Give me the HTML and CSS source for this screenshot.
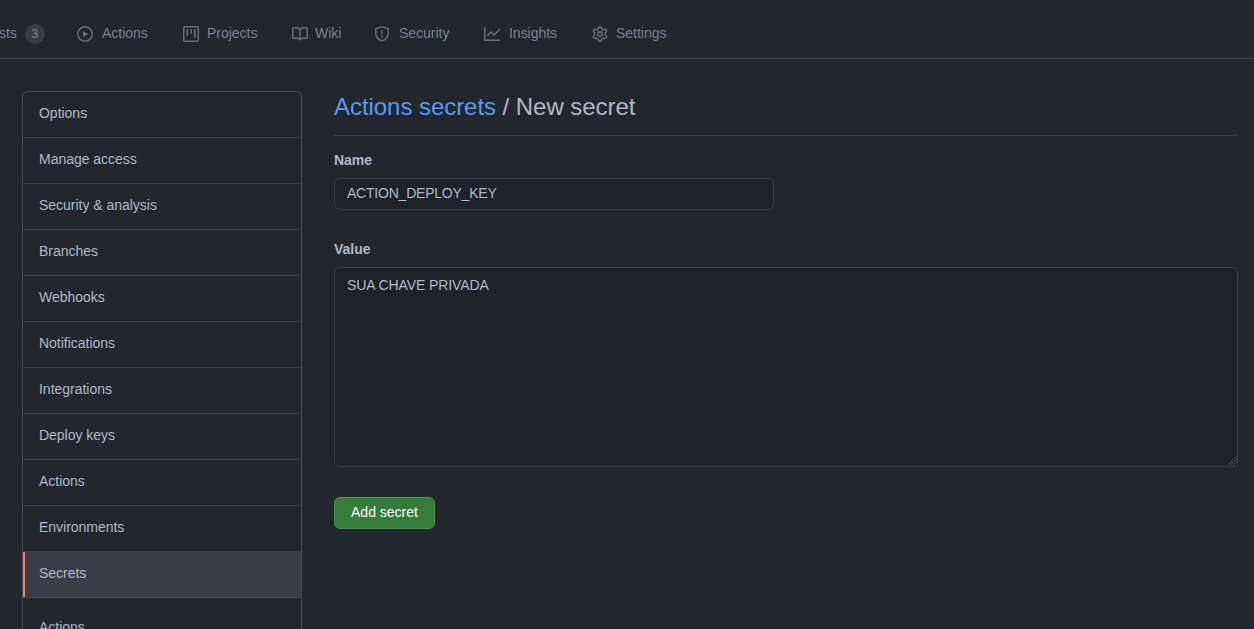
FILE: index.html
```html
<!DOCTYPE html>
<html lang="en">
<head>
<meta charset="utf-8">
<title>New secret</title>
<link rel="stylesheet" href="styles.css">
</head>
<body>
<nav class="tabs">
  <a class="tab tab-pulls"><span>sts</span><span class="counter">3</span></a>
  <a class="tab tab-actions"><svg class="icon" viewBox="0 0 16 16"><path fill-rule="evenodd" d="M1.5 8a6.5 6.5 0 1113 0 6.5 6.5 0 01-13 0zM8 0a8 8 0 100 16A8 8 0 008 0zM6.379 5.227A.25.25 0 006 5.442v5.117a.25.25 0 00.379.214l4.264-2.559a.25.25 0 000-.428L6.379 5.227z"/></svg><span>Actions</span></a>
  <a class="tab tab-projects"><svg class="icon" viewBox="0 0 16 16"><path fill-rule="evenodd" d="M1.75 0A1.75 1.75 0 000 1.75v12.5C0 15.216.784 16 1.75 16h12.5A1.75 1.75 0 0016 14.25V1.75A1.75 1.75 0 0014.25 0H1.75zM1.5 1.75a.25.25 0 01.25-.25h12.5a.25.25 0 01.25.25v12.5a.25.25 0 01-.25.25H1.75a.25.25 0 01-.25-.25V1.75zM11.75 3a.75.75 0 00-.75.75v7.5a.75.75 0 001.5 0v-7.5a.75.75 0 00-.75-.75zm-8.25.75a.75.75 0 011.5 0v5.5a.75.75 0 01-1.5 0v-5.5zM8 3a.75.75 0 00-.75.75v3.5a.75.75 0 001.5 0v-3.5A.75.75 0 008 3z"/></svg><span>Projects</span></a>
  <a class="tab tab-wiki"><svg class="icon" viewBox="0 0 16 16"><path fill-rule="evenodd" d="M0 1.75A.75.75 0 01.75 1h4.253c1.227 0 2.317.59 3 1.501A3.744 3.744 0 0111.006 1h4.245a.75.75 0 01.75.75v10.5a.75.75 0 01-.75.75h-4.507a2.25 2.25 0 00-1.591.659l-.622.621a.75.75 0 01-1.06 0l-.622-.621A2.25 2.25 0 005.258 13H.75a.75.75 0 01-.75-.75V1.75zm8.755 3a2.25 2.25 0 012.25-2.25H14.5v9h-3.757c-.71 0-1.4.201-1.992.572l.004-7.322zm-1.504 7.324l.004-5.073-.002-2.253A2.25 2.25 0 005.003 2.5H1.5v9h3.757a3.75 3.75 0 011.994.574z"/></svg><span>Wiki</span></a>
  <a class="tab tab-security"><svg class="icon" viewBox="0 0 16 16"><path fill-rule="evenodd" d="M7.467.133a1.75 1.75 0 011.066 0l5.25 1.68A1.75 1.75 0 0115 3.48V7c0 1.566-.32 3.182-1.303 4.682-.983 1.498-2.585 2.813-5.032 3.855a1.7 1.7 0 01-1.33 0c-2.447-1.042-4.049-2.357-5.032-3.855C1.32 10.182 1 8.566 1 7V3.48a1.75 1.75 0 011.217-1.667l5.25-1.68zm.61 1.429a.25.25 0 00-.153 0l-5.25 1.68a.25.25 0 00-.174.238V7c0 1.358.275 2.666 1.057 3.86.784 1.194 2.121 2.34 4.366 3.297a.2.2 0 00.154 0c2.245-.956 3.582-2.104 4.366-3.298C13.225 9.666 13.5 8.36 13.5 7V3.48a.25.25 0 00-.174-.237l-5.25-1.68zM9 10.5a1 1 0 11-2 0 1 1 0 012 0zm-.25-5.75a.75.75 0 10-1.5 0v3a.75.75 0 001.5 0v-3z"/></svg><span>Security</span></a>
  <a class="tab tab-insights"><svg class="icon" viewBox="0 0 16 16"><path fill-rule="evenodd" d="M1.5 1.75a.75.75 0 00-1.5 0v12.5c0 .414.336.75.75.75h14.5a.75.75 0 000-1.5H1.5V1.75zm14.28 2.53a.75.75 0 00-1.06-1.06L10 7.94 7.53 5.47a.75.75 0 00-1.06 0L3.22 8.72a.75.75 0 001.06 1.06L7 7.06l2.47 2.47a.75.75 0 001.06 0l5.25-5.25z"/></svg><span>Insights</span></a>
  <a class="tab tab-settings"><svg class="icon" viewBox="0 0 16 16"><path fill-rule="evenodd" d="M7.429 1.525a6.593 6.593 0 011.142 0c.036.003.108.036.137.146l.289 1.105c.147.56.55.967.997 1.189.174.086.341.183.501.29.417.278.97.423 1.53.27l1.102-.303c.11-.03.175.016.195.046.219.31.41.641.573.989.014.031.022.11-.059.19l-.815.806c-.411.406-.562.957-.53 1.456a4.588 4.588 0 010 .582c-.032.499.119 1.05.53 1.456l.815.806c.08.08.073.159.059.19a6.494 6.494 0 01-.573.99c-.02.029-.086.074-.195.045l-1.103-.303c-.559-.153-1.112-.008-1.529.27-.16.107-.327.204-.5.29-.449.222-.851.628-.998 1.189l-.289 1.105c-.029.11-.101.143-.137.146a6.613 6.613 0 01-1.142 0c-.036-.003-.108-.037-.137-.146l-.289-1.105c-.147-.56-.55-.967-.997-1.189a4.502 4.502 0 01-.501-.29c-.417-.278-.97-.423-1.53-.27l-1.102.303c-.11.03-.175-.016-.195-.046a6.492 6.492 0 01-.573-.989c-.014-.031-.022-.11.059-.19l.815-.806c.411-.406.562-.957.53-1.456a4.587 4.587 0 010-.582c.032-.499-.119-1.05-.53-1.456l-.815-.806c-.08-.08-.073-.159-.059-.19a6.44 6.44 0 01.573-.99c.02-.029.086-.075.195-.045l1.103.303c.559.153 1.112.008 1.529-.27.16-.107.327-.204.5-.29.449-.222.851-.628.998-1.189l.289-1.105c.029-.11.101-.143.137-.146zM8 0c-.236 0-.47.01-.701.03-.743.065-1.29.615-1.458 1.261l-.29 1.106c-.017.066-.078.158-.211.224a5.994 5.994 0 00-.668.386c-.123.082-.233.09-.3.071L3.27 2.776c-.644-.177-1.392.02-1.82.63a7.977 7.977 0 00-.704 1.217c-.315.675-.111 1.422.363 1.891l.815.806c.05.048.098.147.088.294a6.084 6.084 0 000 .772c.01.147-.038.246-.088.294l-.815.806c-.474.469-.678 1.216-.363 1.891.2.428.436.835.704 1.218.428.609 1.176.806 1.82.63l1.103-.303c.066-.019.176-.011.299.071.213.143.436.272.668.386.133.066.194.158.212.224l.289 1.106c.169.646.715 1.196 1.458 1.26a8.094 8.094 0 001.402 0c.743-.064 1.29-.614 1.458-1.26l.29-1.106c.017-.066.078-.158.211-.224a5.98 5.98 0 00.668-.386c.123-.082.233-.09.3-.071l1.102.302c.644.177 1.392-.02 1.82-.63.268-.382.505-.789.704-1.217.315-.675.111-1.422-.364-1.891l-.814-.806c-.05-.048-.098-.147-.088-.294a6.1 6.1 0 000-.772c-.01-.147.039-.246.088-.294l.814-.806c.475-.469.679-1.216.364-1.891a7.992 7.992 0 00-.704-1.218c-.428-.609-1.176-.806-1.82-.63l-1.103.303c-.066.019-.176.011-.299-.071a5.991 5.991 0 00-.668-.386c-.133-.066-.194-.158-.212-.224L10.16 1.29C9.99.645 9.444.095 8.701.031A8.094 8.094 0 008 0zm1.5 8a1.5 1.5 0 11-3 0 1.5 1.5 0 013 0zM11 8a3 3 0 11-6 0 3 3 0 016 0z"/></svg><span>Settings</span></a>
</nav>
<div class="layout">
  <aside class="menu">
    <a class="menu-item">Options</a>
    <a class="menu-item">Manage access</a>
    <a class="menu-item">Security &amp; analysis</a>
    <a class="menu-item">Branches</a>
    <a class="menu-item">Webhooks</a>
    <a class="menu-item">Notifications</a>
    <a class="menu-item">Integrations</a>
    <a class="menu-item">Deploy keys</a>
    <a class="menu-item">Actions</a>
    <a class="menu-item">Environments</a>
    <a class="menu-item selected">Secrets</a>
    <a class="menu-item sub">Actions</a>
  </aside>
  <main class="content">
    <h2 class="title"><a class="link">Actions secrets</a> / New secret</h2>
    <label class="label" for="name">Name</label>
    <input class="field name" id="name" type="text" value="ACTION_DEPLOY_KEY">
    <label class="label" for="value">Value</label>
    <div class="value-wrap">
      <textarea class="field value" id="value">SUA CHAVE PRIVADA</textarea>
      <svg class="grip" viewBox="0 0 12 12"><path class="grip-dark" d="M0 11L11 0M3 11l8-8M6 11l5-5M9 11l2-2"/><path class="grip-light" d="M1 11.5L11.5 1M4 11.5L11.5 4M7 11.5L11.5 7"/></svg>
    </div>
    <button class="button">Add secret</button>
  </main>
</div>
</body>
</html>
```
FILE: styles.css
```css
* { box-sizing: border-box; }
body {
  margin: 0;
  height: 629px;
  overflow: hidden;
  background: #22272e;
  color: #adbac7;
  font: 14px/21px "Nimbus Sans", "Liberation Sans", Arial, sans-serif;
  letter-spacing: -0.02px;
  color-scheme: dark;
}
.tabs {
  display: flex;
  height: 59px;
  padding-top: 9px;
  border-bottom: 1px solid #373e47;
  color: #768390;
}
.tab { display: flex; align-items: center; height: 48px; flex: none; }
.icon { width: 16px; height: 16px; margin: 2px 9px 0 0; fill: #636e7b; }
.tab-pulls { width: 78px; margin-left: -1px; }
.tab-pulls .counter {
  width: 20px;
  height: 20px;
  margin: 1px 0 0 8px;
  border-radius: 10px;
  background: #373e47;
  font-size: 12px;
  line-height: 20px;
  text-align: center;
}
.tab-actions { width: 106px; }
.tab-projects { width: 109px; }
.tab-projects .icon { margin-right: 8px; }
.tab-wiki { width: 82px; }
.tab-wiki .icon { margin-right: 7px; }
.tab-security { width: 110px; }
.tab-insights { width: 108px; }
.tab-settings .icon { margin-right: 8px; }
.layout { display: flex; gap: 32px; padding: 32px 16px 0 22px; }
.menu {
  width: 280px;
  height: 560px;
  flex: none;
  border: 1px solid #444c56;
  border-radius: 6px;
  overflow: hidden;
}
.menu-item {
  display: block;
  height: 46px;
  padding: 11px 16px 0;
  border-bottom: 1px solid #373e47;
}
.selected {
  background: #373e47;
  border-bottom-color: #444c56;
  box-shadow: inset 2px 0 #f78166;
}
.sub { padding-top: 19px; }
.content { flex: 1; display: flex; flex-direction: column; align-items: flex-start; }
.title {
  width: 100%;
  height: 45px;
  margin: 0 0 14px;
  border-bottom: 1px solid #373e47;
  font-size: 24px;
  font-weight: 400;
  line-height: 32px;
  letter-spacing: -0.05px;
}
.link { color: #539bf5; }
.label { font-weight: 700; line-height: 21px; margin-bottom: 7px; }
.field {
  display: block;
  border: 1px solid #373e47;
  border-radius: 6px;
  background: #1e232a;
  color: #adbac7;
  font: inherit;
  outline: 0;
}
.name { width: 440px; height: 32px; padding: 4px 12px 6px; margin-bottom: 29px; line-height: 20px; letter-spacing: -0.22px; }
.value-wrap { position: relative; width: 100%; height: 200px; margin-bottom: 30px; }
.value { width: 100%; height: 200px; padding: 7px 12px; margin: 0; resize: none; letter-spacing: -0.1px; }
.grip { position: absolute; right: 0; bottom: 1px; width: 12px; height: 12px; fill: none; }
.grip-dark { stroke: #111418; stroke-width: 1; }
.grip-light { stroke: #5b626b; stroke-width: 0.8; }
.button {
  width: 101px;
  height: 32px;
  padding: 0 0 2px;
  border: 1px solid #46954a;
  border-radius: 6px;
  background: #347d39;
  color: #fff;
  font: inherit;
}
```
